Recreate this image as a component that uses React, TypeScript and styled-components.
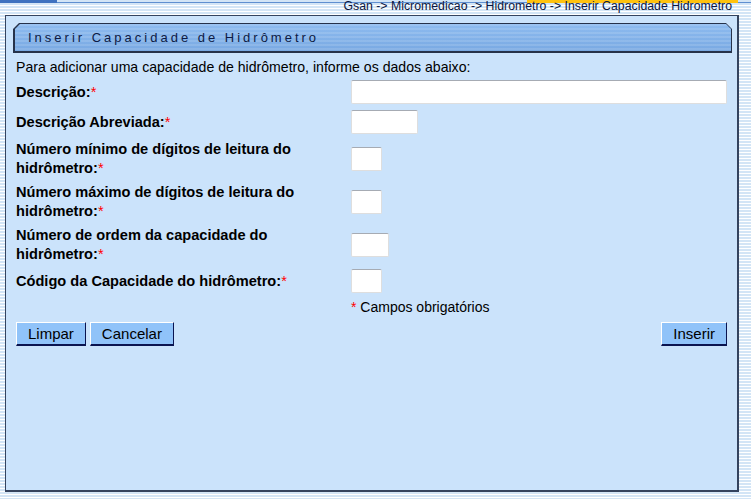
import React from 'react'
import styled, { createGlobalStyle } from 'styled-components'

const GlobalStyle = createGlobalStyle`
  html, body {
    margin: 0;
    padding: 0;
  }
  body {
    background: repeating-linear-gradient(to bottom, #d3e5f6 0px, #d3e5f6 2px, #ffffff 2px, #ffffff 3px);
    font-family: "Liberation Sans", Arial, sans-serif;
    color: #000;
  }
`

const Page = styled.div`
  width: 751px;
  height: 499px;
  overflow: hidden;
`

// Faixa superior com o caminho de navegação
const TopStrip = styled.div`
  position: relative;
  height: 15px;
  display: flex;
  align-items: flex-start;
  border-top: 1px solid transparent;
  box-sizing: border-box;
`

const TopLine = styled.div`
  position: absolute;
  left: 0;
  right: 0;
  top: 1px;
  height: 1px;
  background: #5f8fd0;
`

const TopBlock = styled.div`
  position: absolute;
  left: 0;
  top: -1px;
  width: 57px;
  height: 3px;
  background: #3f72c0;
`

const Highlight = styled.div`
  position: absolute;
  left: 527px;
  top: -1px;
  width: 211px;
  height: 3px;
  background: #ffc20e;
`

const Breadcrumb = styled.div`
  position: relative;
  margin-left: auto;
  margin-right: 19px;
  margin-top: -2px;
  font-size: 12.3px;
  line-height: 14px;
  color: #0b1640;
  white-space: nowrap;
`

const Panel = styled.div`
  margin-left: 5px;
  width: 734px;
  height: 477px;
  box-sizing: border-box;
  background: #cbe3fb;
  border: 1px solid #34435e;
  border-right-width: 2px;
  border-bottom-width: 2px;
  padding: 7px 5px 0 7px;
`

const TitleBar = styled.div`
  height: 30px;
  background: #26324a;
  clip-path: polygon(6px 0, calc(100% - 6px) 0, 100% 6px, 100% 100%, 0 100%, 0 6px);
  padding: 1px 1px 2px 2px;
  box-sizing: border-box;
`

const TitleInner = styled.div`
  height: 100%;
  display: flex;
  align-items: center;
  padding-left: 13px;
  box-sizing: border-box;
  clip-path: polygon(5px 0, calc(100% - 5px) 0, 100% 5px, 100% 100%, 0 100%, 0 5px);
  background:
    repeating-linear-gradient(to bottom, rgba(255, 255, 255, 0.12) 0px, rgba(255, 255, 255, 0.12) 2px, transparent 2px, transparent 4px),
    linear-gradient(to bottom, #8dbbf0, #79a9e2);
  font-size: 13px;
  letter-spacing: 3px;
  color: #0c1a45;
`

const Form = styled.div`
  padding-left: 3px;
  padding-right: 3px;
  margin-top: 4px;
`

const Intro = styled.div`
  height: 20px;
  display: flex;
  align-items: center;
  font-size: 14.1px;
`

const Row = styled.div<{ $h: number }>`
  display: grid;
  grid-template-columns: 335px 1fr;
  align-items: center;
  height: ${(p) => p.$h}px;
`

const Label = styled.div`
  max-width: 320px;
  font-size: 14.6px;
  font-weight: bold;
  line-height: 18.5px;
`

const Req = styled.span`
  color: #ff0000;
  font-weight: normal;
`

const Field = styled.input<{ $w: number }>`
  width: ${(p) => p.$w}px;
  height: 24px;
  box-sizing: border-box;
  background: #fff;
  border: 1px solid #dedede;
  border-top-color: #a6abb3;
  border-radius: 2px;
  padding: 0 3px;
  font-family: inherit;
  font-size: 13px;
  outline: none;
`

const Note = styled.div`
  font-size: 14px;
`

const Actions = styled.div`
  margin-top: 4px;
  display: flex;
  gap: 4px;
  padding-right: 2px;
`

const Button = styled.button<{ $right?: boolean }>`
  height: 24px;
  padding: 0 11px;
  margin-left: ${(p) => (p.$right ? 'auto' : '0')};
  background: #90c3f9;
  border: 1px solid;
  border-color: #ffffff #0a1450 #0a1450 #ffffff;
  border-bottom-width: 2px;
  font-family: "Liberation Sans", Arial, sans-serif;
  font-size: 15px;
  color: #000;
  cursor: pointer;
`

const fields = [
  { label: 'Descrição:', w: 376, h: 30 },
  { label: 'Descrição Abreviada:', w: 67, h: 30 },
  { label: 'Número mínimo de dígitos de leitura do hidrômetro:', w: 31, h: 43 },
  { label: 'Número máximo de dígitos de leitura do hidrômetro:', w: 31, h: 43 },
  { label: 'Número de ordem da capacidade do hidrômetro:', w: 38, h: 43 },
  { label: 'Código da Capacidade do hidrômetro:', w: 31, h: 30 },
]

const App = () => {
  return (
    <Page>
      <GlobalStyle />
      <TopStrip>
        <TopLine />
        <TopBlock />
        <Highlight />
        <Breadcrumb>Gsan -&gt; Micromedicao -&gt; Hidrometro -&gt; Inserir Capacidade Hidrometro</Breadcrumb>
      </TopStrip>
      <Panel>
        <TitleBar>
          <TitleInner>Inserir Capacidade de Hidrômetro</TitleInner>
        </TitleBar>
        <Form>
          <Intro>Para adicionar uma capacidade de hidrômetro, informe os dados abaixo:</Intro>
          {fields.map((f) => (
            <Row key={f.label} $h={f.h}>
              <Label>
                {f.label}
                <Req>*</Req>
              </Label>
              <div>
                <Field $w={f.w} />
              </div>
            </Row>
          ))}
          <Row $h={22}>
            <div />
            <Note>
              <Req>*</Req> Campos obrigatórios
            </Note>
          </Row>
          <Actions>
            <Button>Limpar</Button>
            <Button>Cancelar</Button>
            <Button $right>Inserir</Button>
          </Actions>
        </Form>
      </Panel>
    </Page>
  )
}

export default App
